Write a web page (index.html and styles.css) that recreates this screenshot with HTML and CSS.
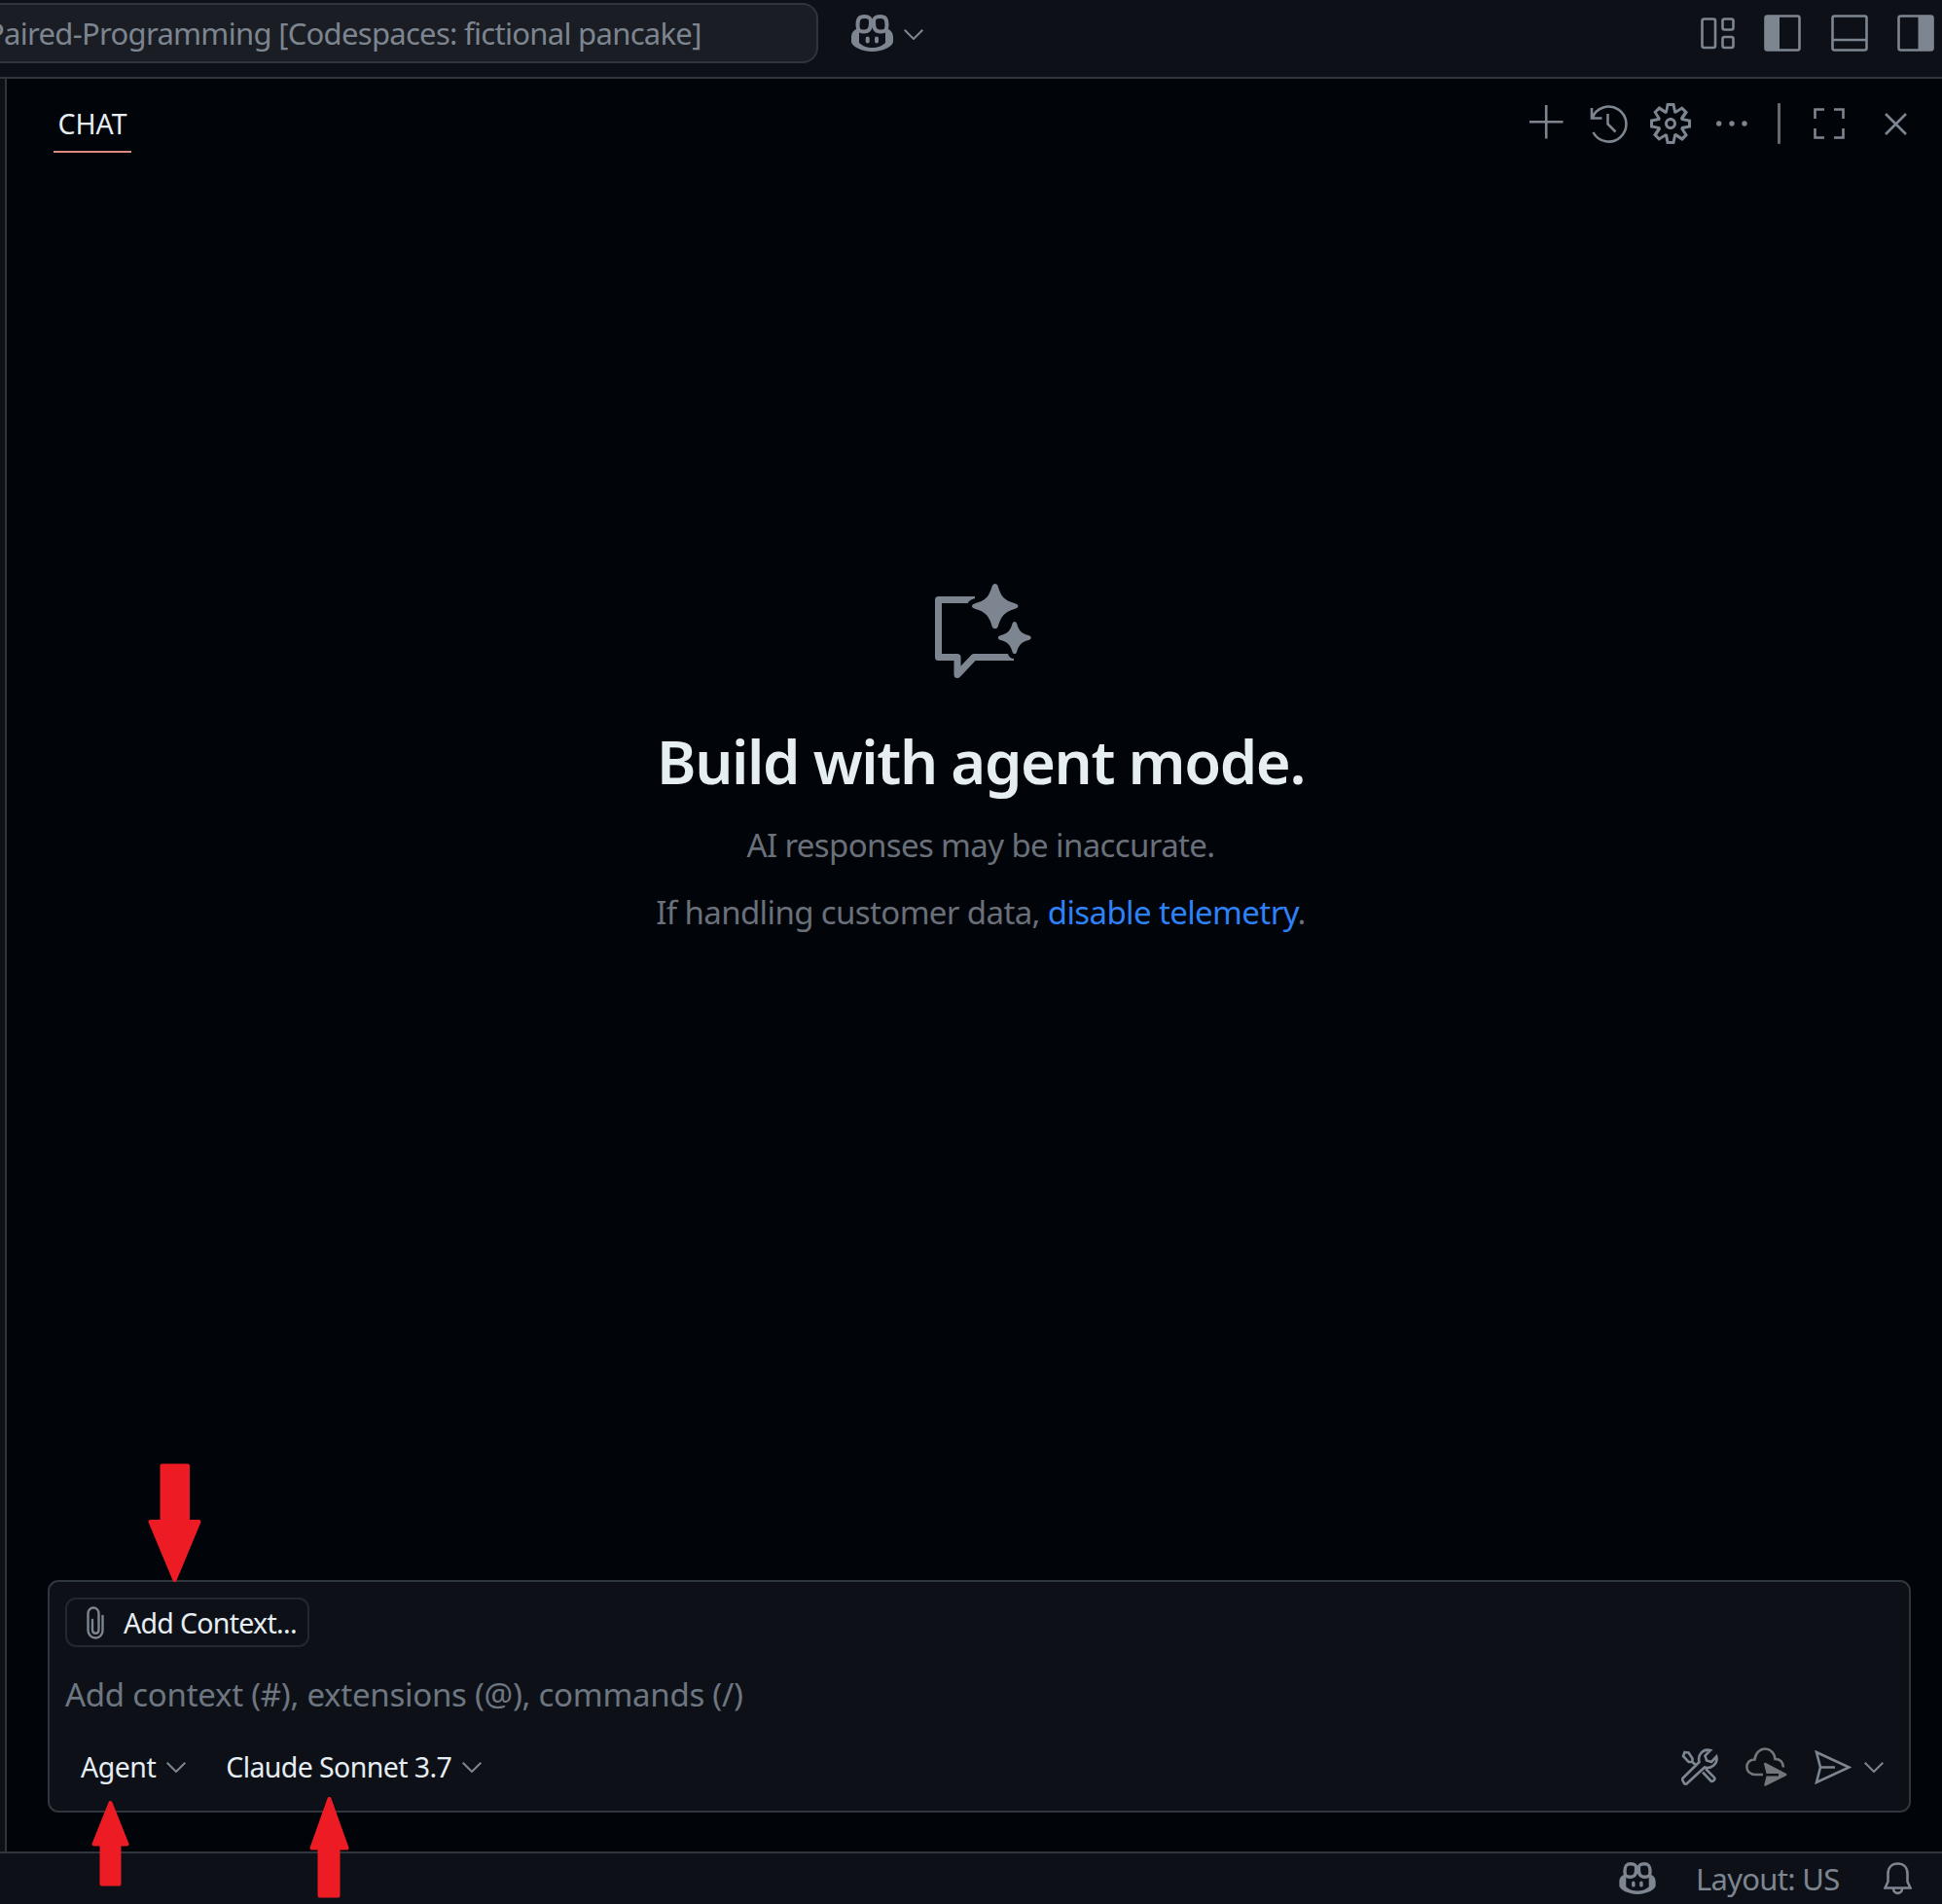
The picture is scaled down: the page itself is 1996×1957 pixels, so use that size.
FILE: index.html
```html
<!DOCTYPE html>
<html lang="en">
<head>
<meta charset="utf-8">
<title>Chat</title>
<link rel="stylesheet" href="styles.css">
</head>
<body>
<svg class="defs" width="0" height="0">
  <symbol id="copilot" viewBox="0 0 43 38">
    <path fill-rule="evenodd" fill="currentColor" d="M5 15C1 17 0 20 0 24v4c0 4 10 10 21.500 10S43 32 43 28v-4c0-4-1-7-5-9zM8 15v14c3 3 8 5 13.500 5S32 32 35 29V15z"/>
    <path fill="none" stroke="currentColor" stroke-width="4" d="M13.500 2c4.500 0 6.500 1 6.500 5.500 0 7-1.500 10-7.500 10-4.500 0-6-1.500-6-6.500 0-6.500 1.500-9 7-9zM29.500 2C25 2 23 3 23 7.500c0 7 1.500 10 7.500 10 4.500 0 6-1.500 6-6.500 0-6.500-1.500-9-7-9z"/>
    <path stroke="currentColor" stroke-width="4" stroke-linecap="round" d="M16.700 24.500v3M26 24.500v3"/>
  </symbol>
  <symbol id="chevron" viewBox="0 0 20 11"><path fill="none" stroke="currentColor" stroke-width="2" d="M.7.700 10 10 19.300.700"/></symbol>
</svg>

<div class="window">
  <header class="titlebar">
    <div class="command-center"><span class="t-title">Paired-Programming [Codespaces: fictional pancake]</span></div>
    <svg class="copilot-lg"><use href="#copilot"/></svg>
    <svg class="chevron chev-title"><use href="#chevron"/></svg>
    <div class="layout-actions">
      <svg width="35" height="38" viewBox="0 0 35 38" fill="none" stroke="currentColor" stroke-width="2.600"><rect x="1.500" y="4.500" width="13.500" height="29.500" rx="2"/><rect x="22.500" y="4.500" width="11" height="11" rx="2"/><rect x="22.500" y="23" width="11" height="11" rx="2"/></svg>
      <svg width="38" height="38" viewBox="0 0 38 38" fill="none" stroke="currentColor" stroke-width="2.600"><rect x="1.500" y="1.500" width="35" height="35" rx="2"/><path fill="currentColor" stroke="none" d="M1 2h15v34H1z"/></svg>
      <svg width="38" height="38" viewBox="0 0 38 38" fill="none" stroke="currentColor" stroke-width="2.600"><rect x="1.500" y="1.500" width="35" height="35" rx="2"/><path d="M1 26h36"/></svg>
      <svg width="38" height="38" viewBox="0 0 38 38" fill="none" stroke="currentColor" stroke-width="2.600"><rect x="1.500" y="1.500" width="35" height="35" rx="2"/><path fill="currentColor" stroke="none" d="M21.500 2H37v34H21.500z"/></svg>
    </div>
  </header>

  <main class="panel">
    <div class="panel-head">
      <div class="tab"><span class="t-tab">CHAT</span></div>
      <div class="actions">
        <svg class="i-plus" viewBox="0 0 35 35"><path d="M17.200 0v34.500M0 17.200h34.500"/></svg>
        <svg class="i-history" viewBox="0 0 40 40"><path d="M3.500 14.500A18 18 0 1 1 4.500 29M3 4v10.500h10.500M19.500 10v10.500l8 8"/></svg>
        <svg class="i-gear" viewBox="1 1 14 14"><path fill="currentColor" stroke="none" d="M9.100 4.400L8.600 2H7.400l-.5 2.400-.7.300-2-1.300-.9.800 1.300 2-.2.700-2.400.5v1.200l2.400.5.3.8-1.300 2 .8.800 2-1.300.8.300.4 2.300h1.200l.5-2.400.8-.3 2 1.300.8-.8-1.300-2 .3-.8 2.300-.4V7.400l-2.400-.5-.3-.8 1.300-2-.8-.8-2 1.300-.7-.2zM9.400 1l.5 2.400L12 2.100l2 2-1.400 2.100 2.400.4v2.800l-2.400.5L14 12l-2 2-2.100-1.400-.5 2.400H6.600l-.5-2.400L4 13.900l-2-2 1.400-2.100L1 9.400V6.600l2.400-.5L2.100 4l2-2 2.100 1.400.4-2.400h2.800zm.6 7c0 1.100-.9 2-2 2s-2-.9-2-2 .9-2 2-2 2 .9 2 2zM8 9c.6 0 1-.4 1-1s-.4-1-1-1-1 .4-1 1 .4 1 1 1z"/></svg>
        <svg class="i-more" viewBox="0 0 34 8"><g fill="currentColor" stroke="none"><circle cx="3.700" cy="4" r="2.700"/><circle cx="17" cy="4" r="2.700"/><circle cx="30" cy="4" r="2.700"/></g></svg>
        <span class="divider"></span>
        <svg class="i-max" viewBox="0 0 32 32"><path d="M1.500 11V1.500H11M21 1.500h9.500V11M30.500 21v9.500H21M11 30.500H1.500V21"/></svg>
        <svg class="i-close" viewBox="0 0 23 23"><path d="M1 1l21 21M22 1 1 22"/></svg>
      </div>
    </div>

    <section class="welcome">
      <svg class="welcome-icon" width="100" height="98" viewBox="0 0 100 98">
        <path fill="none" stroke="currentColor" stroke-width="7" stroke-linejoin="round" d="M42 16.500H4.500v59H24v18L41 75.500H82"/>
        <g fill="currentColor" stroke="#010409" stroke-width="10" paint-order="stroke" stroke-linejoin="round">
          <path d="M62.700 0c1.500 0 2.500 1 3 2.500 3 10 6 14.500 17 17.500 5 1.500 5 4.500 0 6-11 3-14 8-17 18-1 3-5 3-6 0-3-10-6-15-17-18-5-1.500-5-4.500 0-6 11-3 14-7.500 17-17.500.5-1.500 1.500-2.500 3-2.500z"/>
          <path d="M82.800 39c1.200 0 2 .7 2.300 2 2 7 4.500 10 12 12 3.500 1 3.500 4 0 5-7.500 2-10 5-12 12-.8 2.700-3.800 2.700-4.600 0-2-7-4.500-10-12-12-3.500-1-3.500-4 0-5 7.500-2 10-5 12-12 .3-1.300 1.100-2 2.300-2z"/>
        </g>
      </svg>
      <h1><span class="t-h1">Build with agent mode.</span></h1>
      <p><span class="t-p1">AI responses may be inaccurate.</span></p>
      <p><span class="t-p2">If handling customer data, <a>disable telemetry</a>.</span></p>
    </section>

    <section class="input-box">
      <div class="add-context">
        <svg width="18" height="34" viewBox="0 0 18 34"><path fill="none" stroke="currentColor" stroke-width="2.400" stroke-linecap="round" d="M16.500 10v15c0 4-3 7.500-7.300 7.500S1.500 29 1.500 25V7.500C1.500 4 3.800 1.500 7 1.500s5.500 2.500 5.500 6V24c0 2.500-1.200 3.800-3.200 3.800S6 26.500 6 24V14"/></svg>
        <span class="t-add">Add Context...</span>
      </div>
      <div class="placeholder"><span class="t-ph">Add context (#), extensions (@), commands (/)</span></div>
      <div class="input-toolbar">
        <span class="t-agent">Agent</span><svg class="chevron chev-agent"><use href="#chevron"/></svg>
        <span class="t-model">Claude Sonnet 3.7</span><svg class="chevron chev-model"><use href="#chevron"/></svg>
        <div class="send-actions">
          <svg class="i-tools" width="38" height="38" viewBox="0 0 38 38"><path d="M3.500 4 7.500 4.500 11.500 10.500 11.500 14 7.500 14 2 8zM11.500 14l3 3M22 24.500l8.500 9c1.500 1.500 5-1.500 3.500-3.500l-9-9M1.800 33.500c-1-1-1-2 0-3L18.500 14C16.500 7 22 0 30 2l-5.500 5.500 1.500 5 5 1.500 5.200-5.500C38 16 31 21.500 24 19.500L6 36c-1 1-2 1-3 0z"/></svg>
          <svg class="i-cloud" width="43" height="40" viewBox="0 0 43 40"><path d="M18 28H10.500C-1.500 28-1.500 12.500 9.500 12.500 11-2 29-2 30.500 12c5 0 8 3 8.500 8.500"/><path fill="currentColor" stroke="none" d="M19 17c0-1 1-1.500 2-1L42 27q1 1 0 2L21 39.500c-1 .5-2 0-1.700-1L21.500 29.500H34V27H21.500z"/></svg>
          <svg class="i-send" width="38" height="35" viewBox="0 0 38 35"><path d="M2 2 35.500 17.500 2 33 6 17.500zM6 17.500h15"/></svg>
          <svg class="chevron"><use href="#chevron"/></svg>
        </div>
      </div>
    </section>
  </main>

  <footer class="statusbar">
    <svg class="copilot-sm"><use href="#copilot"/></svg>
    <span class="t-layout">Layout: US</span>
    <svg class="i-bell" width="29" height="34" viewBox="0 0 29 34"><path d="M1.500 26.500 4.500 20V12C4.500 5.500 8.500 1.500 14.500 1.500S24.500 5.500 24.500 12v8l3 6.500zM10 27c0 6.500 9 6.500 9 0"/></svg>
  </footer>

  <svg class="pointer pointer-context" width="55" height="123"><path d="M14.500 2.500H41V60H52.500L27.500 120 2.500 60H14.500z"/></svg>
  <svg class="pointer pointer-agent" width="39" height="89"><path d="M19.500 3 36.500 45.500H28.500V86.500H10.500V45.500H2.500z"/></svg>
  <svg class="pointer pointer-model" width="41" height="105"><path d="M20.500 3 38.500 53.500H29.500V102.500H10.500V53.500H2.500z"/></svg>
</div>
</body>
</html>
```
FILE: styles.css
```css
* { box-sizing: border-box; }
body { margin: 0; background: #010409; font-family: "Noto Sans", "Open Sans", sans-serif; color: #7d8590; }
svg { display: block; flex: none; }
span { white-space: nowrap; }
.defs { position: absolute; }

.window { position: relative; width: 1996px; height: 1957px; display: flex; flex-direction: column; overflow: hidden; }

.titlebar { height: 81px; background: #0d1117; border-bottom: 2px solid #30363d; display: flex; align-items: flex-start; padding-top: 3px; }
.command-center { width: 841px; height: 62px; margin-right: 34px; background: #1a1d23; border: 2px solid #30343b; border-left: 0; border-radius: 0 16px 16px 0; display: flex; align-items: center; overflow: hidden; font-size: 31px; }
.t-title { margin-left: -14px; letter-spacing: -0.7px; }
.copilot-lg { width: 43px; height: 38px; margin-top: 12px; }
.chevron { width: 20px; height: 11px; }
.chev-title { margin: 26.5px 0 0 11px; }
.layout-actions { display: flex; gap: 30.5px; margin: 12px 8px 0 auto; }

.panel { flex: 1; border-left: 2px solid #30363d; margin-left: 5px; display: flex; flex-direction: column; box-shadow: -5px 0 #0d1117; }
.panel-head { height: 92px; display: flex; align-items: center; padding: 0 36px 0 48px; }
.tab { width: 80px; height: 60px; padding-top: 2px; border-bottom: 2px solid #d98b7e; color: #e6edf3; font-size: 28.5px; display: flex; align-items: center; justify-content: center; }
.actions { margin-left: auto; display: flex; align-items: center; }
.actions svg, .i-tools, .i-cloud, .i-send, .i-bell { fill: none; stroke: currentColor; stroke-width: 2.6; }
.i-plus { width: 35px; height: 35px; margin: 0 26px 3px 0; }
.i-history { width: 40px; height: 40px; margin-right: 23px; }
.i-gear { width: 42px; height: 42px; margin-right: 25px; }
.i-more { width: 34px; height: 8px; margin-right: 30px; }
.divider { width: 3px; height: 42px; background: #67696c; margin-right: 34px; border-radius: 1px; }
.i-max { width: 32px; height: 32px; margin-right: 41px; }
.i-close { width: 23px; height: 23px; }

.welcome { flex: 1; display: flex; flex-direction: column; align-items: center; padding-top: 427px; padding-left: 13px; }
.welcome-icon { margin-left: 4px; }
.welcome h1 { margin: 48px 0 0; height: 73px; line-height: 73px; font-size: 61.5px; font-weight: 600; letter-spacing: -1.4px; color: #e6edf3; }
.welcome p { margin: 22px 0 0; height: 47px; line-height: 47px; font-size: 33px; letter-spacing: -0.62px; color: #6a7079; }
.welcome h1 + p { margin-top: 26px; }
.welcome a { color: #2f81f7; }

.input-box { margin: 0 32px 40px 42px; height: 239px; border: 2px solid #30363d; border-radius: 11px; background: #0d1117; display: flex; flex-direction: column; padding: 16px; }
.add-context { width: 251px; height: 51px; border: 2px solid #23272e; border-radius: 11px; display: flex; align-items: center; padding-left: 20px; gap: 20px; font-size: 28.5px; letter-spacing: -0.7px; }
.add-context span, .t-agent, .t-model { color: #e6edf3; }
.placeholder { height: 46px; line-height: 46px; margin-top: 26px; font-size: 33px; letter-spacing: -0.26px; color: #6e7681; }
.input-toolbar { display: flex; align-items: center; height: 42px; margin-top: 30px; padding: 0 10px 0 16px; font-size: 28.5px; }
.t-agent { letter-spacing: -0.5px; }
.t-model { letter-spacing: -0.6px; }
.chev-agent { margin: 0 41.5px 0 10.5px; }
.chev-model { margin-left: 11px; }
.send-actions { display: flex; align-items: center; margin-left: auto; }
.i-cloud { color: #73767b; margin: 0 28px 0 27.5px; }
.i-send { margin-right: 13.5px; }

.statusbar { height: 54px; border-top: 2px solid #30363d; background: #0d1117; display: flex; align-items: center; justify-content: flex-end; padding: 0 31px 1px 0; font-size: 31px; }
.copilot-sm { width: 38px; height: 33px; }
.t-layout { margin: 0 45.5px 0 41px; letter-spacing: -0.7px; }

.pointer { position: absolute; fill: #ed1c24; stroke: #ed1c24; stroke-width: 4px; stroke-linejoin: round; }
.pointer-context { left: 152px; top: 1504px; }
.pointer-agent { left: 94px; top: 1850px; }
.pointer-model { left: 318px; top: 1846px; }
```
